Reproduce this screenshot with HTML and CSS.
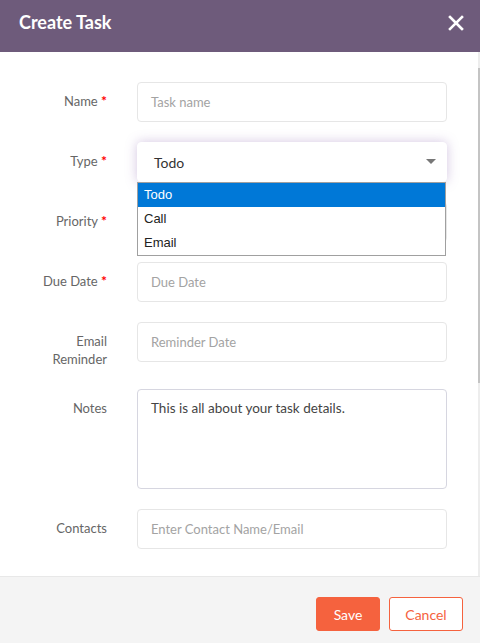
FILE: index.html
```
<!DOCTYPE html>
<html>
<head>
<meta charset="utf-8">
<link rel="stylesheet" href="styles.css">
</head>
<body>
<div class="modal">
  <header class="modal-header">
    <h1 class="modal-title">Create Task</h1>
    <svg class="close-icon" width="16" height="16" viewBox="0 0 16 16"><path d="M2 2 L14 14 M14 2 L2 14" stroke="#fff" stroke-width="2.6" stroke-linecap="square"/></svg>
  </header>
  <div class="modal-body">
    <form class="form">
      <div class="row">
        <label class="label">Name <span class="req">*</span></label>
        <div class="field"><div class="input placeholder">Task name</div></div>
      </div>
      <div class="row">
        <label class="label">Type <span class="req">*</span></label>
        <div class="field">
          <div class="input select">
            <span class="select-value">Todo</span>
            <svg class="caret" width="10" height="6" viewBox="0 0 10 6"><path d="M0 0 H10 L5 5 Z" fill="#777"/></svg>
          </div>
          <ul class="dropdown">
            <li class="option active">Todo</li>
            <li class="option">Call</li>
            <li class="option">Email</li>
          </ul>
        </div>
      </div>
      <div class="row">
        <label class="label">Priority <span class="req">*</span></label>
        <div class="field"><div class="input"></div></div>
      </div>
      <div class="row">
        <label class="label">Due Date <span class="req">*</span></label>
        <div class="field"><div class="input placeholder">Due Date</div></div>
      </div>
      <div class="row">
        <label class="label">Email<br>Reminder</label>
        <div class="field"><div class="input placeholder">Reminder Date</div></div>
      </div>
      <div class="row">
        <label class="label">Notes</label>
        <div class="field"><div class="input textarea">This is all about your task details.</div></div>
      </div>
      <div class="row">
        <label class="label">Contacts</label>
        <div class="field"><div class="input placeholder">Enter Contact Name/Email</div></div>
      </div>
    </form>
    <div class="scrollbar"><div class="thumb"></div></div>
  </div>
  <footer class="modal-footer">
    <button class="btn btn-save" type="button">Save</button>
    <button class="btn btn-cancel" type="button">Cancel</button>
  </footer>
</div>
</body>
</html>
```
FILE: styles.css
```
html, body {
  margin: 0;
  padding: 0;
  background: #fff;
}
body {
  font-family: "Lato", "Open Sans", sans-serif;
  width: 480px;
  height: 643px;
  overflow: hidden;
}
.modal {
  display: flex;
  flex-direction: column;
  height: 643px;
}
.modal-header {
  height: 52px;
  flex: none;
  background: #6e5b7b;
  display: flex;
  align-items: center;
  justify-content: space-between;
  padding: 0 16px 0 19px;
  box-sizing: border-box;
}
.modal-title {
  margin: 0;
  color: #fff;
  font-size: 18px;
  font-weight: 700;
  padding-bottom: 8px;
}
.close-icon {
  display: block;
  margin-bottom: 6px;
}
.modal-body {
  height: 524px;
  flex: none;
  display: flex;
  overflow: hidden;
}
.form {
  flex: 1;
  padding-top: 30px;
  display: flex;
  flex-direction: column;
  gap: 20px;
}
.row {
  display: grid;
  grid-template-columns: 107px 310px;
  column-gap: 30px;
  align-items: start;
}
.label {
  text-align: right;
  font-size: 13px;
  line-height: 18px;
  color: #666;
  padding-top: 10px;
  padding-bottom: 1px;
}
.req {
  color: #f00;
  font-size: 14px;
  font-weight: 700;
}
.field {
  position: relative;
}
.input {
  box-sizing: border-box;
  height: 40px;
  border: 1px solid #e6e6e6;
  border-radius: 4px;
  padding: 0 13px;
  display: flex;
  align-items: center;
  font-size: 13px;
  color: #444;
  background: #fff;
}
.placeholder {
  color: #a3a3a3;
}
.select {
  padding: 0 10px 0 16px;
  justify-content: space-between;
  border-color: #fff;
  box-shadow: 0 0 12px rgba(130, 90, 170, 0.35);
  color: #333;
  font-size: 14px;
}
.caret {
  display: block;
}
.textarea {
  height: 100px;
  align-items: flex-start;
  padding-top: 10px;
  border-color: #d6d6e0;
  color: #444;
  font-size: 13.5px;
}
.dropdown {
  position: absolute;
  left: 0;
  top: 40px;
  width: 309px;
  margin: 0;
  padding: 0;
  list-style: none;
  background: #fff;
  border: 1px solid #a0a0a0;
  box-sizing: border-box;
  font-family: "Liberation Sans", Arial, sans-serif;
  font-size: 13px;
  z-index: 2;
}
.option {
  height: 24px;
  line-height: 24px;
  padding-left: 6px;
  color: #222;
}
.option.active {
  background: #0078d7;
  color: #fff;
}
.scrollbar {
  width: 2px;
  flex: none;
  background: #ededed;
  padding-top: 16px;
}
.thumb {
  height: 315px;
  background: #c4c4c4;
}
.modal-footer {
  flex: 1;
  background: #f4f4f4;
  border-top: 1px solid #e8e8e8;
  display: flex;
  justify-content: flex-end;
  align-items: flex-start;
  gap: 9px;
  padding: 20px 17px 0 0;
}
.btn {
  height: 34px;
  border-radius: 3px;
  font-family: "Lato", "Open Sans", sans-serif;
  font-size: 14px;
  cursor: pointer;
}
.btn-save {
  width: 64px;
  background: #f5623e;
  border: 1px solid #f5623e;
  color: #fff;
}
.btn-cancel {
  width: 74px;
  background: #fff;
  border: 1px solid #f5623e;
  color: #f5623e;
}
```
